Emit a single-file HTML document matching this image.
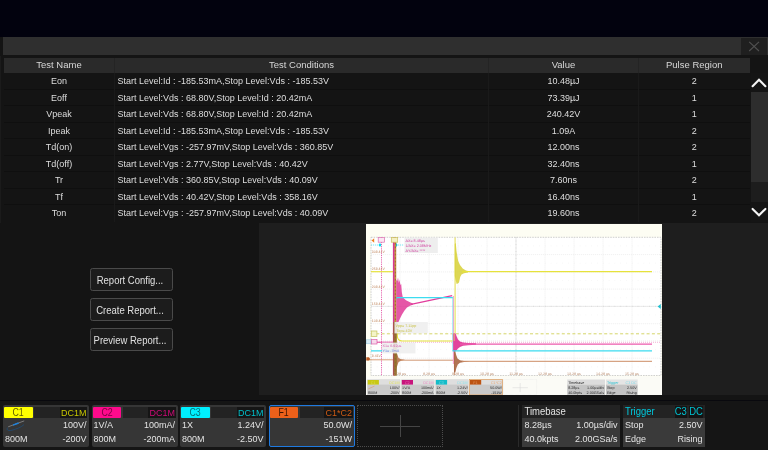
<!DOCTYPE html>
<html>
<head>
<meta charset="utf-8">
<title>Report</title>
<style>
*{box-sizing:border-box;margin:0;padding:0}
html,body{width:768px;height:450px;overflow:hidden;background:#02020e;font-family:"Liberation Sans",sans-serif;color:#d8d8d8}
#root{position:absolute;left:0;top:0;width:768px;height:450px;will-change:transform;overflow:hidden}
.abs{position:absolute}
b{font-weight:normal;display:inline-block}
#panel{position:absolute;left:0;top:36.5px;width:768px;height:362px;background:#141414}
#edge{position:absolute;left:0;top:56px;width:1.2px;height:344px;background:#1b1b1b}
#title{position:absolute;left:3px;top:37px;width:765px;height:18px;background:#2f2f2f}
#close{position:absolute;left:740.5px;top:38px;width:26.5px;height:16.5px;background:#1f1f1f}
#hdbg{position:absolute;left:4px;top:58px;width:745.5px;height:14.7px;background:#242424}
#tbbg{position:absolute;left:4px;top:72.7px;width:745.5px;height:148.8px;background:#0f0f0f}
.hd{position:absolute;top:58px;height:14.7px;background:#2a2a2a;font-size:9.5px;line-height:14.2px;text-align:center;color:#d8d8d8;white-space:nowrap}
.hd b{transform:scaleY(1.03);transform-origin:50% 74%}
.row{position:absolute;left:4px;width:745.5px;height:15.6px;background:#141414;font-size:9px;line-height:16.2px;color:#dedede}
.row span{position:absolute;top:0;height:15.6px;white-space:nowrap}
.row b{transform:scaleY(1.07);transform-origin:50% 72%}
.c1{left:0;width:110px;text-align:center}
.c2{left:113.5px;width:372px;text-align:left}
.c3{left:485px;width:149px;text-align:center}
.c4{left:635px;width:110.5px;text-align:center}
.vline{position:absolute;top:73px;height:148.5px;width:1px;background:#1a1a1a}
#sb{position:absolute;left:750.5px;top:73px;width:17.5px;height:148.5px;background:#151515}
#track{position:absolute;left:751px;top:92px;width:17px;height:110px;background:#1d1d1d}
#thumb{position:absolute;left:751px;top:92px;width:17px;height:90px;background:#2d2d2d}
#lowl{position:absolute;left:0;top:223px;width:259.5px;height:178px;background:#141414}
#lowr{position:absolute;left:259.2px;top:223.3px;width:508.8px;height:172.2px;background:#1e1e1e}
.btn{position:absolute;left:90px;width:82.5px;height:23px;border:1px solid #4a4a4a;border-radius:2.5px;background:#1c1c1c;padding-right:2.5px;font-size:9.5px;line-height:23.4px;text-align:center;color:#e0e0e0;white-space:nowrap}
.btn b{transform:scaleY(1.06);transform-origin:50% 70%}
#lowgap{position:absolute;left:0;top:395.5px;width:768px;height:5px;background:#141414}
#bar{position:absolute;left:0;top:400px;width:768px;height:50px;background:#151515}
#barline{position:absolute;left:0;top:400.2px;width:768px;height:1.3px;background:#09090e}
.ch{position:absolute;top:405px;width:86px;height:42px;background:#363636;border-radius:2px;font-size:9px;color:#e4e4e4}
.ch i{position:absolute;font-style:normal;white-space:nowrap;line-height:12px;height:12px}
.ch b,.tb b{transform:scaleY(1.08);transform-origin:50% 78%}
.ch .tag{left:1.2px;top:1.5px;width:28.8px;height:11.8px;border-radius:1px;text-align:center;font-size:9.6px;line-height:12.6px}
.ch .tag b{transform:scale(0.92,1.13);transform-origin:50% 50%}
.ch .strip{left:31.4px;top:1.7px;width:53px;height:11.3px;background:#232323}
.ch .cpl{right:2px;top:1.7px;height:11.3px;line-height:12.3px;background:#151515;padding:0 0.5px 0 1px;font-size:9px}
.ch .cpl b{transform:scaleY(1.1);transform-origin:50% 50%}
.ch .r1{right:2.5px;top:14px}
.ch .l1{left:2px;top:14px}
.ch .r2{right:2.5px;top:27.5px}
.ch .l2{left:2px;top:27.5px}
.tb{position:absolute;top:405px;height:42px;background:#3a3a3a;font-size:9px;color:#e4e4e4}
.tb i{position:absolute;font-style:normal;white-space:nowrap;line-height:12px;height:12px}
.tb .ttl{left:0;top:0;width:100%;height:13px;background:#232323}
</style>
</head>
<body>
<div id="root">
<div id="panel"></div>
<div id="edge"></div>
<div id="title"></div>
<div id="close"><svg width="26" height="16" viewBox="0 0 26 16" style="display:block"><path d="M8.2 3.8L18 13M18 3.8L8.2 13" stroke="#505050" stroke-width="1.1" fill="none"/></svg></div>
<div id="hdbg"></div>
<div id="tbbg"></div>
<div class="hd" style="left:4px;width:110px"><b>Test Name</b></div>
<div class="hd" style="left:115px;width:373px"><b>Test Conditions</b></div>
<div class="hd" style="left:489px;width:149px"><b>Value</b></div>
<div class="hd" style="left:639px;width:110.5px"><b>Pulse Region</b></div>
<div class="row" style="top:73.2px"><span class="c1"><b>Eon</b></span><span class="c2"><b>Start Level:Id : -185.53mA,Stop Level:Vds : -185.53V</b></span><span class="c3"><b>10.48µJ</b></span><span class="c4"><b>2</b></span></div>
<div class="row" style="top:89.7px"><span class="c1"><b>Eoff</b></span><span class="c2"><b>Start Level:Vds : 68.80V,Stop Level:Id : 20.42mA</b></span><span class="c3"><b>73.39µJ</b></span><span class="c4"><b>1</b></span></div>
<div class="row" style="top:106.2px"><span class="c1"><b>Vpeak</b></span><span class="c2"><b>Start Level:Vds : 68.80V,Stop Level:Id : 20.42mA</b></span><span class="c3"><b>240.42V</b></span><span class="c4"><b>1</b></span></div>
<div class="row" style="top:122.7px"><span class="c1"><b>Ipeak</b></span><span class="c2"><b>Start Level:Id : -185.53mA,Stop Level:Vds : -185.53V</b></span><span class="c3"><b>1.09A</b></span><span class="c4"><b>2</b></span></div>
<div class="row" style="top:139.2px"><span class="c1"><b>Td(on)</b></span><span class="c2"><b>Start Level:Vgs : -257.97mV,Stop Level:Vds : 360.85V</b></span><span class="c3"><b>12.00ns</b></span><span class="c4"><b>2</b></span></div>
<div class="row" style="top:155.7px"><span class="c1"><b>Td(off)</b></span><span class="c2"><b>Start Level:Vgs : 2.77V,Stop Level:Vds : 40.42V</b></span><span class="c3"><b>32.40ns</b></span><span class="c4"><b>1</b></span></div>
<div class="row" style="top:172.2px"><span class="c1"><b>Tr</b></span><span class="c2"><b>Start Level:Vds : 360.85V,Stop Level:Vds : 40.09V</b></span><span class="c3"><b>7.60ns</b></span><span class="c4"><b>2</b></span></div>
<div class="row" style="top:188.7px"><span class="c1"><b>Tf</b></span><span class="c2"><b>Start Level:Vds : 40.42V,Stop Level:Vds : 358.16V</b></span><span class="c3"><b>16.40ns</b></span><span class="c4"><b>1</b></span></div>
<div class="row" style="top:205.2px"><span class="c1"><b>Ton</b></span><span class="c2"><b>Start Level:Vgs : -257.97mV,Stop Level:Vds : 40.09V</b></span><span class="c3"><b>19.60ns</b></span><span class="c4"><b>2</b></span></div>
<div class="vline" style="left:114px"></div><div class="vline" style="left:488px"></div><div class="vline" style="left:638px"></div>
<div id="sb"></div>
<div id="track"></div>
<div id="thumb"></div>
<svg class="abs" style="left:750px;top:73px" width="18" height="19" viewBox="750 73 18 19"><path d="M752.6 86.2L759 79.8L765.4 86.2" stroke="#f4f4f4" stroke-width="2.1" fill="none" stroke-linecap="round"/></svg>
<svg class="abs" style="left:750px;top:202px" width="18" height="19" viewBox="750 202 18 19"><path d="M752.6 208.9L759 215.3L765.4 208.9" stroke="#f4f4f4" stroke-width="2.1" fill="none" stroke-linecap="round"/></svg>
<div id="lowl"></div>
<div id="lowr"></div>
<svg class="abs" style="left:366px;top:224px" width="296" height="171" viewBox="366 224 296 171">
<rect x="366" y="224" width="296" height="171" fill="#fdfdf3"/>
<rect x="371" y="237.3" width="290" height="138.2" fill="#ffffff"/>
<path d="M400 237.3V375.5M429 237.3V375.5M458 237.3V375.5M487 237.3V375.5M516 237.3V375.5M545 237.3V375.5M574 237.3V375.5M603 237.3V375.5M632 237.3V375.5M371 254.6H661M371 271.9H661M371 289.1H661M371 306.4H661M371 323.7H661M371 340.9H661M371 358.2H661" stroke="#ebebeb" stroke-width="0.7" fill="none" stroke-dasharray="1.2 0.8"/>
<path d="M371 306.4H661M516 237.3V375.5" stroke="#e4e4e4" stroke-width="0.7" fill="none"/>
<path d="M371 306.4H661" stroke="#d4d4d4" stroke-width="1.4" fill="none" stroke-dasharray="0.5 5.3"/>
<path d="M516 237.3V375.5" stroke="#d4d4d4" stroke-width="1.4" fill="none" stroke-dasharray="0.5 3"/>
<path d="M371 245.9H661M371 263.2H661M371 280.5H661M371 297.8H661M371 315H661M371 332.3H661M371 349.6H661M371 366.9H661" stroke="#eeeeee" stroke-width="0.7" fill="none" stroke-dasharray="0.6 5.2"/>
<rect x="371" y="237.3" width="290" height="138.2" fill="none" stroke="#c4c4c4" stroke-width="0.8" stroke-dasharray="1.6 1"/>
<path d="M371 333.8H661" stroke="#d0d058" stroke-width="0.9" stroke-dasharray="3 2.3" fill="none"/>
<path d="M371 342.3H661" stroke="#ee80bc" stroke-width="0.6" stroke-dasharray="1 1" fill="none"/>
<path d="M381.5 237.3V375.5" stroke="#e0409a" stroke-width="0.8" stroke-dasharray="1.2 1" fill="none"/>
<path d="M371 245H380M396 245H404" stroke="#40e0f0" stroke-width="0.7" stroke-dasharray="1.2 0.8" fill="none"/>
<path d="M378.6 245L380 243L381.4 245L380 247ZM394.8 245L396.2 243L397.6 245L396.2 247Z" fill="#00d8f0"/>
<path d="M366.5 359.8H393.5" stroke="#d08858" stroke-width="0.8" fill="none"/>
<path d="M396.2 352L397.2 354L398.6 358L401 359.3L405 359.8L401 360.8L398.6 362L397.2 366L396.2 369Z" fill="#b06a40" opacity="0.85"/>
<path d="M400 360.2H453" stroke="#cc8c64" stroke-width="0.9" fill="none"/>
<path d="M454.6 349V375" stroke="#b87850" stroke-width="0.9" fill="none" opacity="0.8"/>
<path d="M453.8 351L455.2 351L456.2 355L457.5 358.5L460 360.2L464 360.9L470 361.2L464 362L460 362.8L457.8 364.5L456.4 368L455.4 372L454 372.5Z" fill="#a86440" opacity="0.9"/>
<path d="M462 361.3H652" stroke="#cc8c64" stroke-width="1" fill="none"/>
<path d="M371 342.2H393" stroke="#e0409a" stroke-width="1" fill="none"/>
<path d="M396.2 280L397.2 281L398 277.5L398.9 283L399.6 279.5L400.4 285L401.2 284L401.8 292L402.6 296.5L404 298.5L406 300.2L410.5 302.6L413 303.6L413 304.6L410 305.8L407 307.6L404.5 310.5L402 314.5L400 318.5L398.5 322L397 325L396.2 326Z" fill="#e03a98" opacity="0.85"/>
<path d="M411 304.4L452.2 295.6" stroke="#e23c9c" stroke-width="1.3" fill="none"/>
<path d="M453.4 296V364" stroke="#f08cc4" stroke-width="0.9" fill="none"/>
<path d="M452.6 334L454 333L455.5 333.3L456.5 336L458 339.5L460 341.5L463 342.6L468 343L476 343.2L476 344.8L468 345.2L463 345.8L460 347L458 348.5L456.5 350.5L455 351.5L453 351Z" fill="#e03a98" opacity="0.95"/>
<path d="M460 344H652" stroke="#ec58ac" stroke-width="1.25" fill="none"/>
<path d="M395.4 350.9V299M452.7 297.6V350.9" stroke="#84e8f6" stroke-width="0.8" fill="none"/>
<path d="M371 350.9H395.3M395.5 299.5Q395.6 297.6 397.5 297.6H452.8M452.5 350.9H652" stroke="#3cdcf0" stroke-width="1.25" fill="none"/>
<path d="M371 271.7H393.3" stroke="#e6e23c" stroke-width="1.2" fill="none"/>
<path d="M397.3 322V336Q397.5 340.9 402 341H452.6" stroke="#e6e23c" stroke-width="1.2" fill="none"/>
<path d="M455.1 333V237.5" stroke="#e6e060" stroke-width="1.3" fill="none" opacity="0.9"/>
<path d="M454.2 341V333" stroke="#e6e060" stroke-width="1" fill="none" opacity="0.7"/>
<path d="M454.8 244L455.8 243L456.5 251L457.3 256L458.2 261L460 265L462.7 268.5L466 270.6L468 271L468 272.4L464 273.2L461.5 274.4L460.2 277L459 282.5L457.8 283.5L456.6 284L455.6 280L454.8 276Z" fill="#d8d23c" opacity="0.88"/>
<path d="M462 271.7H652" stroke="#e6e23c" stroke-width="1.2" fill="none"/>
<rect x="392.9" y="237.3" width="1.9" height="138.2" fill="#d83890"/>
<rect x="394.6" y="237.3" width="1.6" height="138.2" fill="#b06432"/>
<path d="M395.2 237.3V375.5" stroke="#c8b840" stroke-width="0.9" stroke-dasharray="2 1.6" fill="none"/>
<rect x="393.2" y="322" width="3.8" height="53.5" fill="#8a6a28" opacity="0.75"/>
<rect x="404.5" y="237.6" width="33.3" height="15.4" fill="#eeeeee"/>
<rect x="394.5" y="322" width="33.3" height="11.4" fill="#eeeeee" opacity="0.9"/>
<rect x="382" y="342.6" width="33.5" height="10.8" fill="#eeeeee" opacity="0.9"/>
<path d="M371.5 240.5L374.2 238.3V242.7Z" fill="#f08020"/>
<rect x="378.2" y="237.6" width="6.4" height="4.6" fill="#fbe8f4" stroke="#dc70b0" stroke-width="0.7"/>
<rect x="391.3" y="237.6" width="6.4" height="4.6" fill="#f4f0c0" stroke="#c8c060" stroke-width="0.7"/>
<rect x="371.3" y="331" width="5.6" height="5.4" fill="#f4f4c8" stroke="#c8c868" stroke-width="0.8"/>
<rect x="371.4" y="339.6" width="5.6" height="4.4" fill="#f8d8ec" stroke="#dc60a8" stroke-width="0.7"/>
<rect x="366.5" y="339.8" width="4.4" height="4" fill="#d8ecf4" stroke="#90c4dc" stroke-width="0.5"/>
<path d="M366.3 357.2H369L370.2 358.9L369 360.6H366.3Z" fill="#b85820"/>
<path d="M657.6 306.5L660.8 304V309Z" fill="#20c0d0"/>
<path d="M455.6 237.6L454 239.8H457.2Z" fill="#e0e090" opacity="0.0"/>
<g text-rendering="geometricPrecision" font-family="Liberation Sans, sans-serif">
<text x="405.5" y="241.6" font-size="3.7" fill="#d040a0" text-anchor="start">ΔX= 8.48µs</text>
<text x="405.5" y="246.6" font-size="3.7" fill="#d040a0" text-anchor="start">1/ΔX= 2.08MHz</text>
<text x="405.5" y="251.6" font-size="3.7" fill="#d040a0" text-anchor="start">ΔY/ΔX= ****</text>
<text x="395.5" y="326.5" font-size="3.7" fill="#c8c040" text-anchor="start">Vpp= 7.11pp</text>
<text x="396.5" y="331.8" font-size="3.7" fill="#c8c040" text-anchor="start">Top= 43V</text>
<text x="382.6" y="347" font-size="3.7" fill="#d860b0" text-anchor="start">X1= 6.92µs</text>
<text x="382.6" y="351.8" font-size="3.7" fill="#7080e0" text-anchor="start">Y1= -7mA</text>
<text x="371.8" y="253" font-size="3.5" fill="#c08860" text-anchor="start">308.41V</text>
<text x="371.8" y="270.2" font-size="3.5" fill="#c08860" text-anchor="start">258.41V</text>
<text x="371.8" y="287.5" font-size="3.5" fill="#c08860" text-anchor="start">208.41V</text>
<text x="371.8" y="304.8" font-size="3.5" fill="#c08860" text-anchor="start">158.41V</text>
<text x="371.8" y="322.1" font-size="3.5" fill="#c08860" text-anchor="start">108.41V</text>
<text x="371.8" y="356.6" font-size="3.5" fill="#c08860" text-anchor="start">8.41V</text>
<text x="400" y="374.6" font-size="3.6" fill="#b88868" text-anchor="middle">7.28 µs</text>
<text x="429" y="374.6" font-size="3.6" fill="#b88868" text-anchor="middle">8.28 µs</text>
<text x="458" y="374.6" font-size="3.6" fill="#b88868" text-anchor="middle">9.28 µs</text>
<text x="487" y="374.6" font-size="3.6" fill="#b88868" text-anchor="middle">10.28 µs</text>
<text x="516" y="374.6" font-size="3.6" fill="#b88868" text-anchor="middle">11.28 µs</text>
<text x="545" y="374.6" font-size="3.6" fill="#b88868" text-anchor="middle">12.28 µs</text>
<text x="574" y="374.6" font-size="3.6" fill="#b88868" text-anchor="middle">13.28 µs</text>
<text x="603" y="374.6" font-size="3.6" fill="#b88868" text-anchor="middle">14.28 µs</text>
<text x="632" y="374.6" font-size="3.6" fill="#b88868" text-anchor="middle">15.28 µs</text>
</g>
<rect x="366" y="376.6" width="296" height="18.4" fill="#fbfbf6"/>
<g text-rendering="geometricPrecision" font-family="Liberation Sans, sans-serif" font-size="3.7">
<rect x="367.2" y="379.5" width="33.1" height="15.4" fill="#cacaca"/>
<rect x="367.6" y="380" width="32.3" height="4.6" fill="#dedede"/>
<rect x="367.7" y="380" width="11.2" height="4.6" fill="#c8c814"/>
<text x="373.2" y="383.7" fill="#e0e060" text-anchor="middle" opacity="0.8">C1</text>
<text x="399.5" y="383.7" fill="#e0e060" text-anchor="end">DC1M</text>
<text x="399.5" y="388.8" fill="#2a2a2a" text-anchor="end">100V/</text>
<text x="368" y="394" fill="#2a2a2a">800M</text>
<text x="399.5" y="394" fill="#2a2a2a" text-anchor="end">-200V</text>
<rect x="401.3" y="379.5" width="33.1" height="15.4" fill="#cacaca"/>
<rect x="401.7" y="380" width="32.3" height="4.6" fill="#dedede"/>
<rect x="401.8" y="380" width="11.2" height="4.6" fill="#c8147c"/>
<text x="407.3" y="383.7" fill="#e88cc0" text-anchor="middle" opacity="0.8">C2</text>
<text x="433.6" y="383.7" fill="#e88cc0" text-anchor="end">DC1M</text>
<text x="402.1" y="388.8" fill="#2a2a2a">1V/A</text>
<text x="433.6" y="388.8" fill="#2a2a2a" text-anchor="end">100mA/</text>
<text x="402.1" y="394" fill="#2a2a2a">800M</text>
<text x="433.6" y="394" fill="#2a2a2a" text-anchor="end">-200mA</text>
<rect x="435.4" y="379.5" width="33.1" height="15.4" fill="#cacaca"/>
<rect x="435.8" y="380" width="32.3" height="4.6" fill="#dedede"/>
<rect x="435.9" y="380" width="11.2" height="4.6" fill="#14bcc8"/>
<text x="441.4" y="383.7" fill="#8ce0e8" text-anchor="middle" opacity="0.8">C3</text>
<text x="467.7" y="383.7" fill="#8ce0e8" text-anchor="end">DC1M</text>
<text x="436.2" y="388.8" fill="#2a2a2a">1X</text>
<text x="467.7" y="388.8" fill="#2a2a2a" text-anchor="end">1.24V/</text>
<text x="436.2" y="394" fill="#2a2a2a">800M</text>
<text x="467.7" y="394" fill="#2a2a2a" text-anchor="end">-2.50V</text>
<rect x="469.5" y="379.5" width="33.1" height="15.4" fill="#cacaca"/>
<rect x="469.9" y="380" width="32.3" height="4.6" fill="#dedede"/>
<rect x="470" y="380" width="11.2" height="4.6" fill="#bc5414"/>
<text x="475.5" y="383.7" fill="#e8a878" text-anchor="middle" opacity="0.8">F1</text>
<text x="501.8" y="383.7" fill="#e8a878" text-anchor="end">C1*C2</text>
<text x="501.8" y="388.8" fill="#2a2a2a" text-anchor="end">50.0W/</text>
<text x="501.8" y="394" fill="#2a2a2a" text-anchor="end">-151W</text>
<rect x="469.5" y="379.5" width="33.1" height="15.4" fill="none" stroke="#e0a060" stroke-width="0.7"/>
<path d="M368.3 388.9L374.5 386.1" stroke="#e09050" stroke-width="0.5"/>
<path d="M512.5 387.7H527.9M520.2 383.1V392.1" stroke="#dcdcdc" stroke-width="0.6" fill="none"/>
<rect x="503.6" y="379.5" width="33" height="15.4" fill="none" stroke="#e4e4e4" stroke-width="0.5" stroke-dasharray="0.6 0.6"/>
<rect x="567.2" y="379.5" width="37.8" height="5" fill="#dcdcdc"/>
<rect x="567.2" y="384.5" width="37.8" height="10.4" fill="#c4c4c4"/>
<text x="568.2" y="383.6" fill="#2a2a2a">Timebase</text>
<text x="568.2" y="388.8" fill="#2a2a2a">8.28µs</text>
<text x="604" y="388.8" fill="#2a2a2a" text-anchor="end">1.00µs/div</text>
<text x="568.2" y="394" fill="#2a2a2a">40.0kpts</text>
<text x="604" y="394" fill="#2a2a2a" text-anchor="end">2.00GSa/s</text>
<rect x="605.9" y="379.5" width="31.8" height="5" fill="#e4e4e4"/>
<rect x="605.9" y="384.5" width="31.8" height="10.4" fill="#c4c4c4"/>
<text x="606.9" y="383.6" fill="#30c0d0">Trigger</text>
<text x="636.7" y="383.6" fill="#80d8e4" text-anchor="end">C3 DC</text>
<text x="606.9" y="388.8" fill="#2a2a2a">Stop</text>
<text x="636.7" y="388.8" fill="#2a2a2a" text-anchor="end">2.50V</text>
<text x="606.9" y="394" fill="#2a2a2a">Edge</text>
<text x="636.7" y="394" fill="#2a2a2a" text-anchor="end">Rising</text>
</g>
</svg>
<div class="btn" style="top:268px"><b>Report Config...</b></div>
<div class="btn" style="top:298px"><b>Create Report...</b></div>
<div class="btn" style="top:328px"><b>Preview Report...</b></div>
<div id="lowgap"></div>
<div id="bar"></div>
<div id="barline"></div>
<div class="ch" style="left:3px"><i class="tag" style="background:#ffff00;color:#5e5e00"><b>C1</b></i><i class="strip"></i><i class="cpl" style="color:#c8c800"><b>DC1M</b></i><svg class="abs" style="left:2px;top:14px" width="24" height="14" viewBox="0 0 24 14"><path d="M2.6 8.6C1.2 10.6 3 12.4 7 11.2C11 10 16 8.6 19 5.6" stroke="#1d4f80" stroke-width="0.7" fill="none"/><path d="M3.2 7.8L19.2 1.9" stroke="#7a7a7a" stroke-width="1"/><path d="M8 6.1L13.6 4" stroke="#1e82dc" stroke-width="1.5"/></svg><i class="r1"><b style="transform-origin:100% 78%">100V/</b></i><i class="l2"><b style="transform-origin:0% 78%">800M</b></i><i class="r2"><b style="transform-origin:100% 78%">-200V</b></i></div>
<div class="ch" style="left:91.5px"><i class="tag" style="background:#ff0a8c;color:#7a0040"><b>C2</b></i><i class="strip"></i><i class="cpl" style="color:#d00a78"><b>DC1M</b></i><i class="l1"><b style="transform-origin:0% 78%">1V/A</b></i><i class="r1"><b style="transform-origin:100% 78%">100mA/</b></i><i class="l2"><b style="transform-origin:0% 78%">800M</b></i><i class="r2"><b style="transform-origin:100% 78%">-200mA</b></i></div>
<div class="ch" style="left:180px"><i class="tag" style="background:#00f0ff;color:#007078"><b>C3</b></i><i class="strip"></i><i class="cpl" style="color:#00c0cc"><b>DC1M</b></i><i class="l1"><b style="transform-origin:0% 78%">1X</b></i><i class="r1"><b style="transform-origin:100% 78%">1.24V/</b></i><i class="l2"><b style="transform-origin:0% 78%">800M</b></i><i class="r2"><b style="transform-origin:100% 78%">-2.50V</b></i></div>
<div class="ch" style="left:268.5px;border:1px solid #1f7ae0"><i class="tag" style="background:#ec601a;color:#3c1400;left:0.19999999999999996px;top:0.5px"><b>F1</b></i><i class="strip" style="left:30.4px;top:0.7px"></i><i class="cpl" style="color:#cc5a14;right:1px;top:0.7px"><b>C1*C2</b></i><i class="r1" style="right:1.5px;top:13px"><b style="transform-origin:100% 78%">50.0W/</b></i><i class="r2" style="right:1.5px;top:26.5px"><b style="transform-origin:100% 78%">-151W</b></i></div>
<div class="abs" style="left:357px;top:405px;width:85.5px;height:42px;border:1px dotted #4c4c4c"></div>
<div class="abs" style="left:380px;top:426px;width:40px;height:1px;background:#454545"></div>
<div class="abs" style="left:399.5px;top:415px;width:1px;height:22px;background:#454545"></div>
<div class="abs" style="left:518px;top:405px;width:1px;height:42px;background:#2a2a2a"></div>
<div class="tb" style="left:522px;width:98px"><i class="ttl"></i><i style="left:2.5px;top:0.5px;font-size:9.5px"><b style="transform-origin:0% 78%">Timebase</b></i><i style="left:2.5px;top:14px"><b style="transform-origin:0% 78%">8.28µs</b></i><i style="right:2.5px;top:14px"><b style="transform-origin:100% 78%">1.00µs/div</b></i><i style="left:2.5px;top:27.5px"><b style="transform-origin:0% 78%">40.0kpts</b></i><i style="right:2.5px;top:27.5px"><b style="transform-origin:100% 78%">2.00GSa/s</b></i></div>
<div class="tb" style="left:622.5px;width:82.5px"><i class="ttl"></i><i style="left:2.5px;top:0.5px;font-size:9.5px;color:#00c8dc"><b style="transform-origin:0% 78%">Trigger</b></i><i style="left:52px;top:0.5px;width:12.5px;height:12px;background:#141414;color:#00c0d0;font-size:9.5px;text-align:center"><b>C3</b></i><i style="left:66.5px;top:0.5px;width:14px;height:12px;background:#141414;color:#00c0d0;font-size:9.5px;text-align:center"><b>DC</b></i><i style="left:2.5px;top:14px"><b style="transform-origin:0% 78%">Stop</b></i><i style="right:2.5px;top:14px"><b style="transform-origin:100% 78%">2.50V</b></i><i style="left:2.5px;top:27.5px"><b style="transform-origin:0% 78%">Edge</b></i><i style="right:2.5px;top:27.5px"><b style="transform-origin:100% 78%">Rising</b></i></div>
</div>
</body>
</html>
